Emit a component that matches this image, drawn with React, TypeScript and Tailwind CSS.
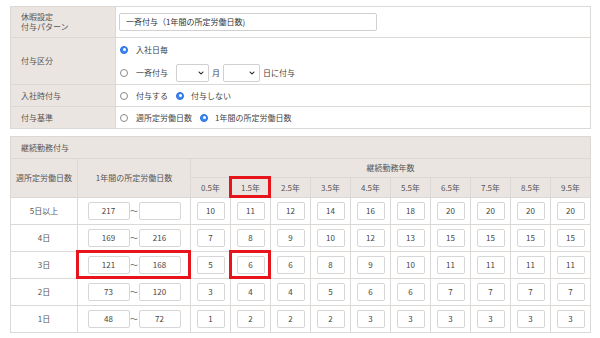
import React from 'react';
import { FaChevronDown } from 'react-icons/fa';

const years = ['0.5年', '1.5年', '2.5年', '3.5年', '4.5年', '5.5年', '6.5年', '7.5年', '8.5年', '9.5年'];

const rows = [
  { label: '5日以上', from: '217', to: '', days: [10, 11, 12, 14, 16, 18, 20, 20, 20, 20] },
  { label: '4日', from: '169', to: '216', days: [7, 8, 9, 10, 12, 13, 15, 15, 15, 15] },
  { label: '3日', from: '121', to: '168', days: [5, 6, 6, 8, 9, 10, 11, 11, 11, 11] },
  { label: '2日', from: '73', to: '120', days: [3, 4, 4, 5, 6, 6, 7, 7, 7, 7] },
  { label: '1日', from: '48', to: '72', days: [1, 2, 2, 2, 3, 3, 3, 3, 3, 3] },
];

function Radio({ checked }: { checked?: boolean }) {
  if (checked) {
    return (
      <span className="w-[8px] h-[8px] rounded-full bg-[#3a86f7] border border-[#2a6fd8] flex items-center justify-center shrink-0">
        <span className="w-[3px] h-[3px] rounded-full bg-white" />
      </span>
    );
  }
  return <span className="w-[8px] h-[8px] rounded-full border border-[#8a8a8a] bg-white shrink-0" />;
}

function Select({ w }: { w: string }) {
  return (
    <span className={`${w} h-[18px] border border-[#d0d0d0] rounded-[2px] bg-white flex items-center justify-end pr-[4px]`}>
      <FaChevronDown className="text-[#222]" size={6} />
    </span>
  );
}

function RedMark() {
  return <span className="absolute -top-[2px] -bottom-[1px] -left-[2px] -right-[1px] border-[3px] border-[#e8141c] pointer-events-none" />;
}

function Box({ value, w = 'w-[28px]' }: { value: string | number; w?: string }) {
  return (
    <span className={`${w} h-[18px] border border-[#d6d6d6] rounded-[2px] bg-white flex items-center justify-center text-[#444]`}>
      {value}
    </span>
  );
}

export default function App() {
  const label = 'bg-[#ebe5e2] font-normal text-left pl-[10px] border border-[#dcd8d5] text-[#555]';
  const cell = 'border border-[#dcd8d5] pl-[3px]';
  const head = 'bg-[#ebe5e2] font-normal border border-[#dcd8d5] text-[#555] text-center';

  return (
    <div className="w-[600px] h-[338px] bg-white pt-[6px] px-[10px] font-['Noto_Sans_CJK_JP','Noto_Sans',sans-serif] text-[8px] text-[#444] overflow-hidden">
      <table className="w-[581px] border-collapse table-fixed">
        <colgroup>
          <col className="w-[105px]" />
          <col />
        </colgroup>
        <tbody>
          <tr className="h-[31px]">
            <th className={`${label} leading-[10px]`}>
              休暇設定
              <br />
              付与パターン
            </th>
            <td className={cell}>
              <div className="w-[258px] h-[18px] border border-[#d0d0d0] rounded-[2px] flex items-center pl-[6px] text-[#333]">
                一斉付与（1年間の所定労働日数)
              </div>
            </td>
          </tr>
          <tr className="h-[47px]">
            <th className={label}>付与区分</th>
            <td className={cell}>
              <div className="flex flex-col gap-[5px] pl-[1px]">
                <div className="flex items-center gap-[8px] h-[18px]">
                  <Radio checked />
                  <span>入社日毎</span>
                </div>
                <div className="flex items-center h-[18px]">
                  <Radio />
                  <span className="ml-[8px] mr-[8px]">一斉付与</span>
                  <Select w="w-[33px]" />
                  <span className="mx-[3px]">月</span>
                  <Select w="w-[37px]" />
                  <span className="ml-[3px]">日に付与</span>
                </div>
              </div>
            </td>
          </tr>
          <tr className="h-[22px]">
            <th className={label}>入社時付与</th>
            <td className={cell}>
              <div className="flex items-center pl-[1px]">
                <Radio />
                <span className="ml-[8px] mr-[8px]">付与する</span>
                <Radio checked />
                <span className="ml-[7px]">付与しない</span>
              </div>
            </td>
          </tr>
          <tr className="h-[22px]">
            <th className={label}>付与基準</th>
            <td className={cell}>
              <div className="flex items-center pl-[1px]">
                <Radio />
                <span className="ml-[8px] mr-[8px]">週所定労働日数</span>
                <Radio checked />
                <span className="ml-[7px]">1年間の所定労働日数</span>
              </div>
            </td>
          </tr>
        </tbody>
      </table>

      <table className="mt-[7px] w-[581px] border-collapse table-fixed">
        <colgroup>
          <col className="w-[67px]" />
          <col className="w-[113px]" />
          {years.map((y) => (
            <col key={y} />
          ))}
        </colgroup>
        <thead>
          <tr className="h-[22px]">
            <th colSpan={12} className={`${head} text-left pl-[10px]`}>
              継続勤務付与
            </th>
          </tr>
          <tr className="h-[19px]">
            <th rowSpan={2} className={head}>週所定労働日数</th>
            <th rowSpan={2} className={head}>1年間の所定労働日数</th>
            <th colSpan={10} className={head}>継続勤務年数</th>
          </tr>
          <tr className="h-[20px]">
            {years.map((y, i) => (
              <th key={y} className={`${head} relative`}>
                {y}
                {i === 1 && <RedMark />}
              </th>
            ))}
          </tr>
        </thead>
        <tbody>
          {rows.map((r, ri) => (
            <tr key={r.label} className="h-[27px]">
              <td className="border border-[#dcd8d5] text-center text-[#555]">{r.label}</td>
              <td className="border border-[#dcd8d5] relative">
                <div className="flex items-center justify-center">
                  <Box value={r.from} w="w-[42px]" />
                  <span className="w-[9px] text-center text-[#666]">〜</span>
                  <Box value={r.to} w="w-[42px]" />
                </div>
                {ri === 2 && <RedMark />}
              </td>
              {r.days.map((d, di) => (
                <td key={di} className="border border-[#dcd8d5] relative">
                  <div className="flex justify-center">
                    <Box value={d} />
                  </div>
                  {ri === 2 && di === 1 && <RedMark />}
                </td>
              ))}
            </tr>
          ))}
        </tbody>
      </table>
    </div>
  );
}
